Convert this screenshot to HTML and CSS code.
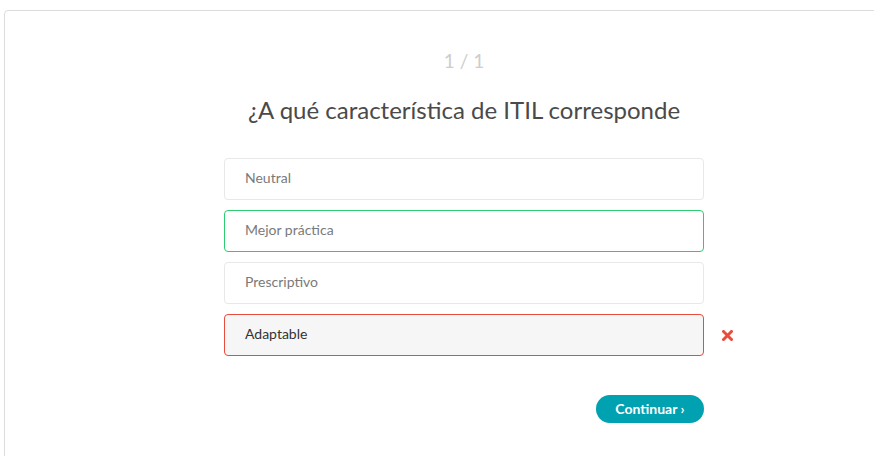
FILE: index.html
```html
<!DOCTYPE html>
<html lang="es">
<head>
<meta charset="utf-8">
<link rel="stylesheet" href="styles.css">
</head>
<body>
<div class="viewport">
<div class="card">
  <div class="counter">1 / 1</div>
  <h1 class="question">¿A qué característica de ITIL corresponde</h1>
  <div class="options">
    <div class="row"><div class="option">Neutral</div></div>
    <div class="row"><div class="option correct">Mejor práctica</div></div>
    <div class="row"><div class="option">Prescriptivo</div></div>
    <div class="row">
      <div class="option wrong">Adaptable</div>
      <svg class="mark" width="11" height="11" viewBox="0 0 11 11"><path d="M1.5 1.5 L9.5 9.5 M9.5 1.5 L1.5 9.5" stroke="#e74c3c" stroke-width="3" stroke-linecap="square"/></svg>
    </div>
  </div>
  <div class="actions">
    <button class="btn">Continuar ›</button>
  </div>
</div>
</div>
</body>
</html>
```
FILE: styles.css
```css
html, body {
  margin: 0;
  padding: 0;
  background: #fff;
  overflow: hidden;
}
body {
  font-family: Lato, "Open Sans", sans-serif;
}
.viewport {
  width: 100vw;
  height: 100vh;
  overflow: hidden;
  box-sizing: border-box;
  padding: 10px 0 0 4px;
}
.card {
  width: 920px;
  height: 480px;
  box-sizing: border-box;
  border: 1px solid #dcdcdc;
  border-radius: 4px;
  background: #fff;
  display: flex;
  flex-direction: column;
  align-items: center;
  padding-top: 36px;
}
.counter {
  font-size: 19px;
  color: #cdcdcd;
  line-height: 28px;
}
.question {
  margin: 19px 0 0;
  font-size: 24px;
  font-weight: 400;
  color: #4a4a4a;
  line-height: 31px;
}
.options {
  margin-top: 33px;
  display: flex;
  flex-direction: column;
  gap: 10px;
  width: 480px;
}
.row {
  position: relative;
  display: flex;
  align-items: center;
}
.option {
  flex: 1;
  height: 42px;
  box-sizing: border-box;
  border: 1px solid #e8e8e8;
  border-radius: 4px;
  padding: 0 20px 3px;
  display: flex;
  align-items: center;
  font-size: 14px;
  color: #7a7a7a;
}
.option.correct {
  border-color: #2ecc71;
}
.option.wrong {
  border-color: #e74c3c;
  background: #f6f6f6;
  color: #333;
}
.mark {
  position: absolute;
  left: 498px;
  top: 16px;
}
.actions {
  width: 480px;
  display: flex;
  justify-content: flex-end;
  margin-top: 39px;
}
.btn {
  height: 28px;
  width: 108px;
  border: none;
  border-radius: 14px;
  background: #00a1b0;
  color: #fff;
  font-family: inherit;
  font-size: 14px;
  font-weight: 700;
  padding: 0 0 1px;
  cursor: pointer;
}
```
